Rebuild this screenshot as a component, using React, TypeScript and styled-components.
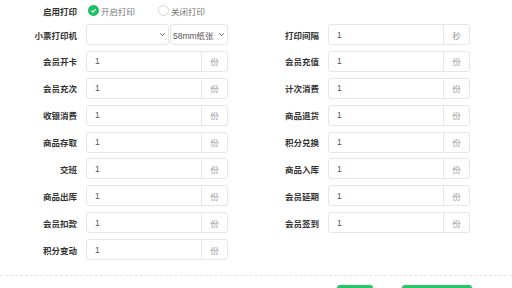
import styled, {createGlobalStyle} from 'styled-components';

const GlobalStyle = createGlobalStyle`
  html, body {
    margin: 0;
    padding: 0;
    background: #fff;
    overflow: hidden;
  }
  body {
    font-family: "Liberation Sans", "Noto Sans CJK SC", sans-serif;
    font-size: 8.5px;
    color: #333;
  }
`;

const leftRows = ['会员开卡', '会员充次', '收银消费', '商品存取', '交班', '商品出库', '会员扣款', '积分变动'];
const rightRows = ['会员充值', '计次消费', '商品退货', '积分兑换', '商品入库', '会员延期', '会员签到'];

function Chevron() {
  return (
    <svg width="7" height="7" viewBox="0 0 10 10">
      <path d="M2 3.5 L5 6.5 L8 3.5" fill="none" stroke="#555" strokeWidth="1.4" />
    </svg>
  );
}

function CopiesField({unit = '份'}: {unit?: string}) {
  return (
    <InputGroup>
      <Input defaultValue="1" />
      <Suffix>{unit}</Suffix>
    </InputGroup>
  );
}

function App() {
  const rows: [string, string | null][] = [];
  for (let i = 0; i < leftRows.length; i++) {
    rows.push([leftRows[i], rightRows[i] ?? null]);
  }

  return (
    <Page>
      <GlobalStyle />
      <Form>
        <TopRow>
          <Label>启用打印</Label>
          <Radios>
            <RadioItem>
              <RadioDot $checked>
                <svg width="7" height="7" viewBox="0 0 10 10">
                  <path d="M2 5.2 L4.2 7.3 L8.2 3" fill="none" stroke="#fff" strokeWidth="1.8" />
                </svg>
              </RadioDot>
              开启打印
            </RadioItem>
            <RadioItem>
              <RadioDot />
              关闭打印
            </RadioItem>
          </Radios>
        </TopRow>
        <Grid>
          <Item>
            <Label>小票打印机</Label>
            <Selects>
              <Select $width={83}>
                <span />
                <Chevron />
              </Select>
              <Select $width={58}>
                <span>58mm纸张</span>
                <Chevron />
              </Select>
            </Selects>
          </Item>
          <Item>
            <Label>打印间隔</Label>
            <CopiesField unit="秒" />
          </Item>
          {rows.map(([left, right]) => (
            <Pair key={left}>
              <Item>
                <Label>{left}</Label>
                <CopiesField />
              </Item>
              {right && (
                <Item>
                  <Label>{right}</Label>
                  <CopiesField />
                </Item>
              )}
            </Pair>
          ))}
        </Grid>
      </Form>
      <Footer>
        <Button $width={36}>取消</Button>
        <Button $width={70}>保存设置</Button>
      </Footer>
    </Page>
  );
}

const Page = styled.div`
  width: 512px;
  height: 288px;
  display: flex;
  flex-direction: column;
  overflow: hidden;
`;

const Form = styled.div`
  display: flex;
  flex-direction: column;
  gap: 3px;
  height: 275px;
  flex-shrink: 0;
`;

const TopRow = styled.div`
  display: flex;
  align-items: center;
  height: 21px;
`;

const Label = styled.div`
  width: 86px;
  box-sizing: border-box;
  padding-right: 9px;
  text-align: right;
  font-weight: bold;
  color: #333;
  flex-shrink: 0;
`;

const Radios = styled.div`
  display: flex;
  align-items: center;
  gap: 23px;
  padding-left: 2px;
`;

const RadioItem = styled.label`
  display: flex;
  align-items: center;
  gap: 2px;
  color: #777;
`;

const RadioDot = styled.span<{$checked?: boolean}>`
  width: 11px;
  height: 11px;
  box-sizing: border-box;
  border-radius: 50%;
  display: flex;
  align-items: center;
  justify-content: center;
  background: ${p => (p.$checked ? '#19c160' : '#fff')};
  border: 1px solid ${p => (p.$checked ? '#19c160' : '#d6d6d6')};
`;

const Grid = styled.div`
  display: grid;
  grid-template-columns: 242px 242px;
  row-gap: 5.875px;
`;

const Pair = styled.div`
  display: contents;
`;

const Item = styled.div`
  display: flex;
  align-items: center;
  height: 21px;
`;

const Selects = styled.div`
  display: flex;
  gap: 1px;
`;

const Select = styled.div<{$width: number}>`
  width: ${p => p.$width}px;
  height: 21px;
  box-sizing: border-box;
  border: 1px solid #e6e6e6;
  border-radius: 3px;
  display: flex;
  align-items: center;
  justify-content: space-between;
  padding: 0 2px 0 2px;
  color: #555;
  font-size: 8.5px;
`;

const InputGroup = styled.div`
  width: 142px;
  height: 21px;
  box-sizing: border-box;
  border: 1px solid #e6e6e6;
  border-radius: 3px;
  display: flex;
`;

const Input = styled.input`
  flex: 1;
  min-width: 0;
  border: none;
  outline: none;
  padding: 0 0 0 8px;
  font-family: "Liberation Sans", "Noto Sans CJK SC", sans-serif;
  font-size: 8.5px;
  color: #555;
  background: transparent;
`;

const Suffix = styled.div`
  width: 25px;
  border-left: 1px solid #e6e6e6;
  display: flex;
  align-items: center;
  justify-content: center;
  color: #999;
`;

const Footer = styled.div`
  border-top: 1px dashed #e4e4e4;
  display: flex;
  flex-shrink: 0;
  padding: 9px 0 0 337px;
  gap: 29px;
`;

const Button = styled.button<{$width: number}>`
  width: ${p => p.$width}px;
  height: 26px;
  border: none;
  border-radius: 3px;
  background: #25c866;
  color: #fff;
  font-family: "Liberation Sans", "Noto Sans CJK SC", sans-serif;
  font-size: 9px;
  padding: 0;
`;

export default App;
